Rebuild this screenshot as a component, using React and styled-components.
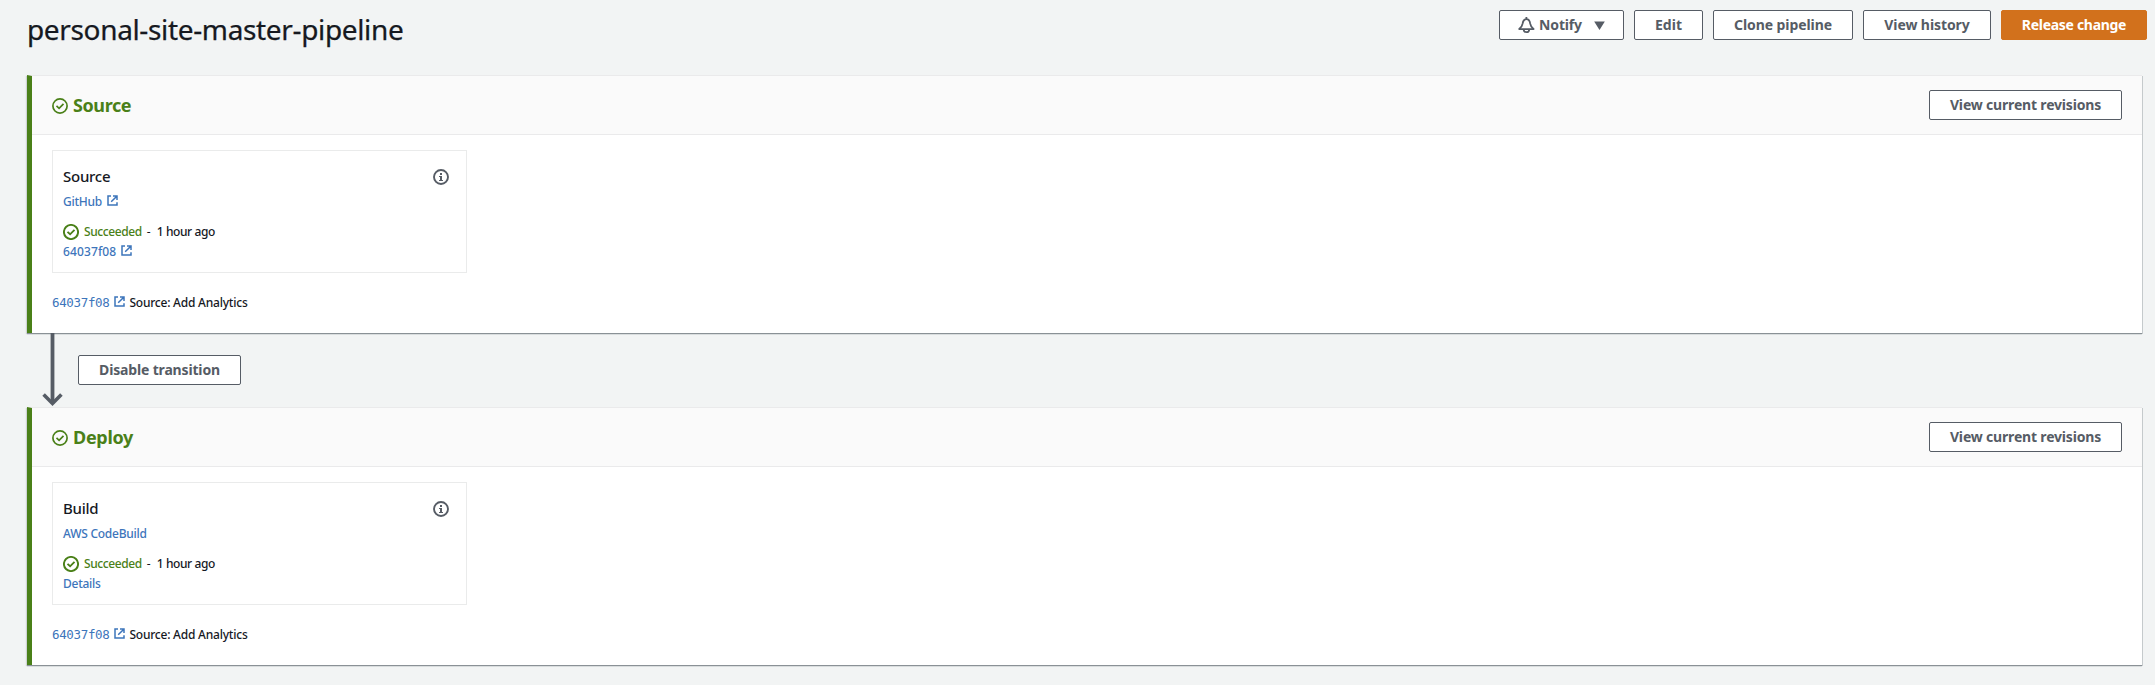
import React from 'react';
import styled, { createGlobalStyle } from 'styled-components';

const ink = '#16191f';
const slate = '#565c65';
const green = '#4a8018';
const blue = '#3d75bb';

const GlobalStyle = createGlobalStyle`
  * { box-sizing: border-box; }
  body {
    margin: 0;
    background: #f2f4f4;
    color: ${ink};
    font-family: 'Noto Sans', 'Open Sans', sans-serif;
    font-size: 12px;
  }
  svg { display: block; flex: none; }
`;

const Page = styled.main`
  min-height: 685px;
  padding-left: 27px;
`;

const PageHeader = styled.header`
  display: flex;
  justify-content: space-between;
  align-items: flex-start;
  height: 75px;
  padding: 10px 8px 0 0;
`;

const Title = styled.h1`
  margin: 1px 0 0;
  font-size: 28px;
  line-height: 36px;
  font-weight: 400;
  letter-spacing: -0.35px;
  -webkit-text-stroke: 0.25px ${ink};
  white-space: nowrap;
`;

const Toolbar = styled.div`
  display: flex;
  gap: 10px;
`;

const Button = styled.button`
  display: flex;
  align-items: center;
  justify-content: center;
  width: ${(p) => p.$width}px;
  height: 30px;
  padding: 0;
  border: 1px solid ${(p) => (p.$primary ? '#d2711c' : slate)};
  border-radius: 2px;
  background: ${(p) => (p.$primary ? '#d2711c' : '#fff')};
  color: ${(p) => (p.$primary ? '#fff' : slate)};
  font: 700 14px/28px 'Noto Sans', 'Open Sans', sans-serif;
  letter-spacing: ${(p) => p.$track || 0}px;
  white-space: nowrap;
`;

const NotifyLabel = styled.span`
  margin: 0 12px 0 4px;
`;

const Stage = styled.section`
  width: 2115px;
  height: 258px;
  border-left: 5px solid ${green};
  border-top: 1px solid #eaeaeb;
  background: #fff;
  box-shadow: 0 1px 0 #8a9196, 1px 1px 0 #c5cacc, -1px 1px 1px rgba(0, 28, 36, 0.15), 0 2px 0 #dfe3e4;
`;

const StageHeader = styled.div`
  display: flex;
  align-items: center;
  height: 59px;
  padding: 0 20px;
  border-bottom: 1px solid #eaeaeb;
  background: #fafafa;

  > svg { margin-top: 1px; }
`;

const StageTitle = styled.h2`
  flex: 1;
  margin: 0 0 0 5px;
  color: ${green};
  font-size: 18px;
  line-height: 24px;
  font-weight: 700;
  letter-spacing: ${(p) => p.$track}px;
`;

const StageBody = styled.div`
  padding: 15px 20px 0;
`;

const Card = styled.article`
  display: flex;
  flex-direction: column;
  width: 415px;
  height: 123px;
  padding: 16px 17px 0 10px;
  border: 1px solid #eaebeb;
`;

const CardHead = styled.div`
  display: flex;
  justify-content: space-between;
  height: 18px;
  margin-bottom: 6px;

  svg { margin-top: 2px; }
`;

const CardTitle = styled.h3`
  margin: 0;
  font-size: 15px;
  line-height: 18px;
  font-weight: 500;
  letter-spacing: -0.27px;
`;

const Line = styled.div`
  display: flex;
  align-items: center;
  height: 20px;
  white-space: nowrap;
`;

const StatusLine = styled(Line)`
  margin-top: 11px;
  height: 19px;
`;

const Link = styled.a`
  display: flex;
  align-items: center;
  gap: 5px;
  color: ${blue};
  font-weight: 500;
  letter-spacing: ${(p) => p.$track || 0}px;

  svg { margin-bottom: 1px; }
`;

const CommitLink = styled(Link)`
  font-family: 'DejaVu Sans Mono', monospace;
  font-size: 12.5px;
  font-weight: 400;
  letter-spacing: -0.35px;
`;

const Status = styled.span`
  margin: 0 5px 0 5px;
  color: ${green};
  font-weight: 500;
  letter-spacing: -0.4px;
`;

const Age = styled.span`
  margin-left: 6px;
  font-weight: 500;
  letter-spacing: -0.4px;
`;

const Commit = styled(Line)`
  margin-top: 19px;
`;

const Message = styled.span`
  margin-left: 4px;
  font-weight: 500;
  letter-spacing: -0.22px;
`;

const Transition = styled.div`
  display: flex;
  gap: 15px;
  height: 74px;
  padding-left: 15px;

  button { margin-top: 22px; }
`;

const Arrow = styled.svg`
  position: relative;
`;

const CheckIcon = ({ weight }) => (
  <svg width="16" height="16" viewBox="0 0 16 16" fill="none" stroke={green} strokeWidth={weight}>
    <circle cx="8" cy="8" r="7.1" />
    <path d="M4.5 7.9 7.1 10.3 11.5 5.9" />
  </svg>
);

const InfoIcon = () => (
  <svg width="16" height="16" viewBox="0 0 16 16" fill="none" stroke={slate}>
    <circle cx="8" cy="8" r="7" strokeWidth="1.9" />
    <path d="M7 4h2v2H7zM6 7h3v4h1v1H6v-1h1V8H6z" fill={slate} stroke="none" />
  </svg>
);

const ExternalIcon = () => (
  <svg width="11" height="11" viewBox="0 0 11 11" fill="none" stroke={blue} strokeWidth="1.5">
    <path d="M4 1H1v9h9V7.2M6 1h4v4M9.8 1.2 4.2 6.8" />
  </svg>
);

const BellIcon = () => (
  <svg width="17" height="18" viewBox="0 0 17 18" fill="none" stroke={slate} strokeWidth="1.8">
    <path d="M8.4 1v2M1.2 13.1h14.4c-2.6-1.6-3-3.200-3.400-5.400C11.800 4.900 10.500 3.200 8.400 3.200S5 4.900 4.600 7.700c-.4 2.200-.8 3.800-3.400 5.400Z" strokeLinejoin="round" />
    <path d="M5.700 13.400c.1 3.700 5.400 3.700 5.500 0" />
  </svg>
);

const CaretIcon = () => (
  <svg width="11" height="9" viewBox="0 0 11 9" fill={slate}>
    <path d="M.2.5h10.600L5.500 9Z" />
  </svg>
);

const stages = [
  { name: 'Source', track: -0.4, action: 'Source', provider: 'GitHub', external: true, ref: '64037f08' },
  { name: 'Deploy', track: -0.3, action: 'Build', provider: 'AWS CodeBuild', external: false, ref: 'Details' },
];

const PipelineStage = ({ stage }) => (
  <Stage>
    <StageHeader>
      <CheckIcon weight={1.7} />
      <StageTitle $track={stage.track}>{stage.name}</StageTitle>
      <Button $width={193} $track={-0.18}>View current revisions</Button>
    </StageHeader>
    <StageBody>
      <Card>
        <CardHead>
          <CardTitle>{stage.action}</CardTitle>
          <InfoIcon />
        </CardHead>
        <Line>
          <Link $track={-0.25}>
            {stage.provider}
            {stage.external && <ExternalIcon />}
          </Link>
        </Line>
        <StatusLine>
          <CheckIcon weight={1.9} />
          <Status>Succeeded</Status>-<Age>1 hour ago</Age>
        </StatusLine>
        <Line>
          <Link $track={stage.external ? 0.12 : -0.25}>
            {stage.ref}
            {stage.external && <ExternalIcon />}
          </Link>
        </Line>
      </Card>
      <Commit>
        <CommitLink>
          64037f08
          <ExternalIcon />
        </CommitLink>
        <Message>Source: Add Analytics</Message>
      </Commit>
    </StageBody>
  </Stage>
);

export default function App() {
  return (
    <Page>
      <GlobalStyle />
      <PageHeader>
        <Title>personal-site-master-pipeline</Title>
        <Toolbar>
          <Button $width={125} $track={-0.15}>
            <BellIcon />
            <NotifyLabel>Notify</NotifyLabel>
            <CaretIcon />
          </Button>
          <Button $width={69}>Edit</Button>
          <Button $width={140} $track={-0.08}>Clone pipeline</Button>
          <Button $width={128} $track={-0.08}>View history</Button>
          <Button $width={146} $primary $track={-0.3}>Release change</Button>
        </Toolbar>
      </PageHeader>
      <PipelineStage stage={stages[0]} />
      <Transition>
        <Arrow width="21" height="74" viewBox="0 0 21 74" fill="none" stroke={slate} strokeWidth="3.8">
          <path d="M10.500 0v70.500" />
          <path d="M1.600 61.500l8.900 8.900 8.900-8.900" strokeWidth="3.600" />
        </Arrow>
        <Button $width={163} $track={-0.16}>Disable transition</Button>
      </Transition>
      <PipelineStage stage={stages[1]} />
    </Page>
  );
}
